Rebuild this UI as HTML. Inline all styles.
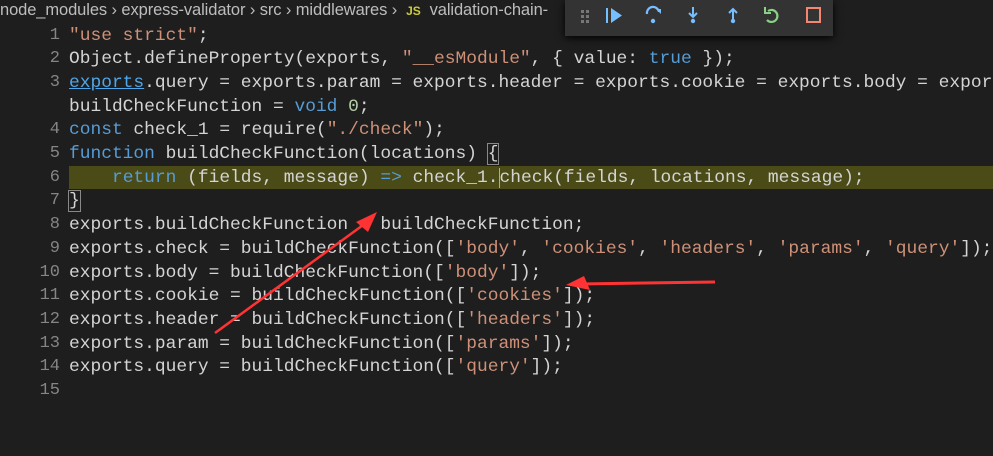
<!DOCTYPE html>
<html><head><meta charset="utf-8"><style>
html,body{margin:0;width:993px;height:456px;overflow:hidden}
body{background:#1e1e1e;position:relative;font-family:"Liberation Mono",monospace}
.bc{position:absolute;left:0;top:0;height:22px;line-height:20px;font-family:"Liberation Sans",sans-serif;font-size:16.5px;color:#bdbdbd;white-space:nowrap;letter-spacing:-0.1px}
.bc .js{color:#cbcb41;font-weight:bold;font-size:12px}
.r{position:absolute;left:0;height:24px;line-height:24px;font-size:17.9px;white-space:pre;color:#d4d4d4;width:993px;overflow:hidden}
.n{position:absolute;left:0;width:60px;text-align:right;color:#858585;font-size:17px}
.c{position:absolute;left:69px}
.s{color:#ce9178}.k{color:#569cd6}.g{color:#b5cea8}
.hl{position:absolute;left:69px;top:166px;width:924px;height:23px;background:#4b4b18}
.tb{position:absolute;left:565px;top:0;width:268px;height:36px;background:#333;box-shadow:0 2px 8px #000}
</style></head><body>
<div class="bc">node_modules &#8250; express-validator &#8250; src &#8250; middlewares &#8250; &nbsp;<span class="js">JS</span>&nbsp; validation-chain-</div>
<div class="hl"></div>
<div class="r" style="top:23.5px"><span class="n">1</span><span class="c"><span class="s">"use strict"</span>;</span></div>
<div class="r" style="top:47.2px"><span class="n">2</span><span class="c">Object.defineProperty(exports, <span class="s">"__esModule"</span>, { value: <span class="k">true</span> });</span></div>
<div class="r" style="top:70.9px"><span class="n">3</span><span class="c"><span style="color:#4fa6e8;text-decoration:underline">exports</span>.query = exports.param = exports.header = exports.cookie = exports.body = expor</span></div>
<div class="r" style="top:94.6px"><span class="c">buildCheckFunction = <span class="k">void</span> <span class="g">0</span>;</span></div>
<div class="r" style="top:118.3px"><span class="n">4</span><span class="c"><span class="k">const</span> check_1 = require(<span class="s">"./check"</span>);</span></div>
<div class="r" style="top:142px"><span class="n">5</span><span class="c"><span class="k">function</span> buildCheckFunction(locations) <span style="outline:1px solid #888">{</span></span></div>
<div class="r" style="top:165.7px"><span class="n">6</span><span class="c">    <span class="k">return</span> (fields, message) <span class="k">=&gt;</span> check_1.<span style="border-left:1px solid #aaa">check</span>(fields, locations, message);</span></div>
<div class="r" style="top:189.4px"><span class="n">7</span><span class="c"><span style="outline:1px solid #888">}</span></span></div>
<div class="r" style="top:213.1px"><span class="n">8</span><span class="c">exports.buildCheckFunction = buildCheckFunction;</span></div>
<div class="r" style="top:236.8px"><span class="n">9</span><span class="c">exports.check = buildCheckFunction([<span class="s">'body'</span>, <span class="s">'cookies'</span>, <span class="s">'headers'</span>, <span class="s">'params'</span>, <span class="s">'query'</span>]);</span></div>
<div class="r" style="top:260.5px"><span class="n">10</span><span class="c">exports.body = buildCheckFunction([<span class="s">'body'</span>]);</span></div>
<div class="r" style="top:284.2px"><span class="n">11</span><span class="c">exports.cookie = buildCheckFunction([<span class="s">'cookies'</span>]);</span></div>
<div class="r" style="top:307.9px"><span class="n">12</span><span class="c">exports.header = buildCheckFunction([<span class="s">'headers'</span>]);</span></div>
<div class="r" style="top:331.6px"><span class="n">13</span><span class="c">exports.param = buildCheckFunction([<span class="s">'params'</span>]);</span></div>
<div class="r" style="top:355.3px"><span class="n">14</span><span class="c">exports.query = buildCheckFunction([<span class="s">'query'</span>]);</span></div>
<div class="r" style="top:379px"><span class="n">15</span></div>
<div class="tb"></div>
<svg style="position:absolute;left:0;top:0" width="993" height="456">
<g fill="#777"><rect x="581" y="10" width="3" height="3"/><rect x="586" y="10" width="3" height="3"/><rect x="581" y="15" width="3" height="3"/><rect x="586" y="15" width="3" height="3"/><rect x="581" y="20" width="3" height="3"/><rect x="586" y="20" width="3" height="3"/></g>
<g fill="#75beff" stroke="#75beff"><rect x="606" y="8" width="2" height="15" stroke="none"/><path d="M611 8 L622 15.5 L611 23Z" stroke="none"/>
<path d="M647 14 A6 6 0 0 1 659 12" fill="none" stroke-width="2.2"/><path d="M656 9 L661 9 L661 14Z" stroke="none"/><circle cx="653" cy="21" r="2.2" stroke="none"/>
<path d="M693 7 V17 M689 13 L693 17 L697 13" fill="none" stroke-width="2"/><circle cx="693" cy="21" r="2.2" stroke="none"/>
<path d="M733 19 V9 M729 13 L733 9 L737 13" fill="none" stroke-width="2"/><circle cx="733" cy="21" r="2.2" stroke="none"/></g>
<path d="M768 11 A6 6 0 1 1 767 20" fill="none" stroke="#89d185" stroke-width="2.2"/><path d="M765 7 L765 13 L771 13" fill="none" stroke="#89d185" stroke-width="2"/>
<rect x="807" y="8" width="13" height="14" fill="none" stroke="#f48771" stroke-width="2"/>
<g fill="#f33" stroke="#f33"><path d="M215 333 L370 220" stroke-width="2.5"/><path d="M377 212 L356 222 L368 232Z" stroke="none"/>
<path d="M715 282 L580 284" stroke-width="3"/><path d="M566 285 L584 276 L590 290Z" stroke="none"/></g>
</svg>
</body></html>
